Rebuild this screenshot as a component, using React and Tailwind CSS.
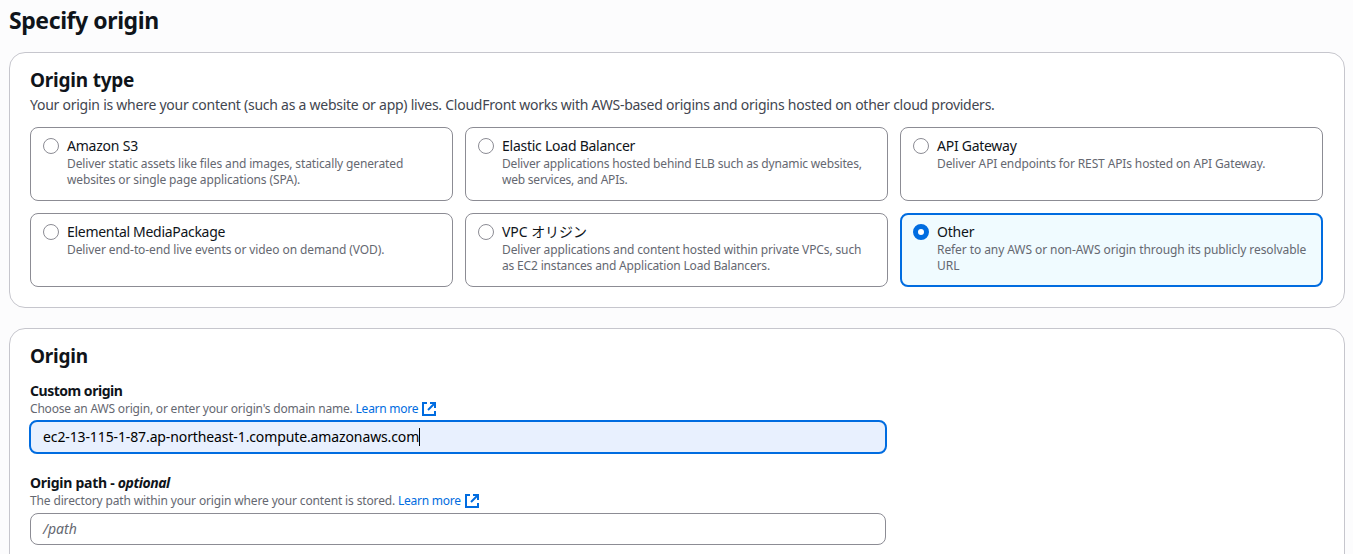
import React from "react";

const ORIGIN_TYPES = [
  {
    label: "Amazon S3",
    track: "tracking-[-0.22px]",
    lines: [
      ["Deliver static assets like files and images, statically generated", "tracking-[-0.133px]"],
      ["websites or single page applications (SPA).", "tracking-[-0.12px]"],
    ],
  },
  {
    label: "Elastic Load Balancer",
    track: "tracking-[-0.25px]",
    lines: [
      ["Deliver applications hosted behind ELB such as dynamic websites,", "tracking-[-0.17px]"],
      ["web services, and APIs.", "tracking-[-0.22px]"],
    ],
  },
  {
    label: "API Gateway",
    track: "tracking-[-0.27px]",
    lines: [["Deliver API endpoints for REST APIs hosted on API Gateway.", "tracking-[-0.13px]"]],
  },
  {
    label: "Elemental MediaPackage",
    track: "tracking-[-0.3px]",
    lines: [["Deliver end-to-end live events or video on demand (VOD).", "tracking-[-0.1px]"]],
  },
  {
    label: "VPC オリジン",
    track: "tracking-[-0.05px]",
    lines: [
      ["Deliver applications and content hosted within private VPCs, such", "tracking-[-0.13px]"],
      ["as EC2 instances and Application Load Balancers.", "tracking-[-0.167px]"],
    ],
  },
  {
    label: "Other",
    track: "tracking-[-0.2px]",
    selected: true,
    lines: [
      ["Refer to any AWS or non-AWS origin through its publicly resolvable", "tracking-[-0.08px]"],
      ["URL", "tracking-normal"],
    ],
  },
];

function ExternalIcon() {
  return (
    <svg viewBox="0 0 16 16" className="ml-[3px] size-4 shrink-0" fill="none" stroke="#006ce0" strokeWidth="2">
      <path d="M9 2h5v5" />
      <path d="m7 9 6.5-6.5" />
      <path d="M14 10v4H2V2h4" />
    </svg>
  );
}

function Tile({ label, track, lines, selected }) {
  return (
    <label
      className={
        "flex h-[74px] gap-2 rounded-lg " +
        (selected ? "border-2 border-[#006ce0] bg-[#f0fbff] px-[11px] pt-[7px]" : "border border-[#8c8c94] bg-white px-3 pt-2")
      }
    >
      <span
        className={
          "mt-0.5 size-4 shrink-0 rounded-full bg-white " + (selected ? "border-5 border-[#006ce0]" : "border border-[#8c8c94]")
        }
      />
      <span className="flex flex-col whitespace-nowrap">
        <span className={"text-[14px] leading-5 text-[#0f141a] " + track}>{label}</span>
        {lines.map(([line, lineTrack]) => (
          <span key={line} className={"text-[12px] leading-4 text-[#656871] " + lineTrack}>
            {line}
          </span>
        ))}
      </span>
    </label>
  );
}

function Hint({ track, children }) {
  return (
    <p className="flex h-4 items-center text-[12px] leading-4 whitespace-nowrap text-[#656871]">
      <span className={"whitespace-pre " + track}>{children} </span>
      <a className="flex items-center text-[#006ce0]">
        <span className="tracking-[-0.25px]">Learn more</span>
        <ExternalIcon />
      </a>
    </p>
  );
}

export default function App() {
  return (
    <main className="h-[554px] overflow-hidden bg-[#fcfcfd] pr-2 pl-[9px] font-['Noto_Sans','Noto_Sans_CJK_JP',sans-serif] text-[#0f141a]">
      <h1 className="h-[52px] pt-[5px] text-[23px] leading-[30px] font-bold tracking-[-0.42px]">
        <span>Specify origin</span>
      </h1>

      <section className="h-[256px] rounded-2xl border border-[#c6c6cd] bg-white px-5 pt-[15px]">
        <h2 className="text-[19px] leading-6 font-bold tracking-[-0.22px]">
          <span>Origin type</span>
        </h2>
        <p className="mt-[3px] text-[14px] leading-5 tracking-[-0.251px] whitespace-nowrap text-[#424650]">
          <span>Your origin is where your content (such as a website or app) lives. CloudFront works with AWS-based origins and origins hosted on other cloud providers.</span>
        </p>
        <div className="mt-3 mr-px grid grid-cols-3 gap-3">
          {ORIGIN_TYPES.map((type) => (
            <Tile key={type.label} {...type} />
          ))}
        </div>
      </section>

      <section className="mt-5 h-[300px] rounded-2xl border border-[#c6c6cd] bg-white px-5 pt-[15px]">
        <h2 className="text-[19px] leading-6 font-bold tracking-[-0.22px]">
          <span>Origin</span>
        </h2>
        <div className="mt-[13px]">
          <h3 className="text-[14px] leading-5 font-bold tracking-[-0.48px]">
            <span>Custom origin</span>
          </h3>
          <Hint track="tracking-[-0.19px]">Choose an AWS origin, or enter your origin's domain name.</Hint>
          <div className="mt-[3px] -ml-px flex h-[34px] w-[858px] items-center rounded-lg border-2 border-[#006ce0] bg-[#e8f0fe] px-3 pb-0.5 text-[14px] tracking-[-0.115px] text-black">
            <span>ec2-13-115-1-87.ap-northeast-1.compute.amazonaws.com</span>
            <span className="mt-0.5 h-[18px] w-px bg-black" />
          </div>
        </div>
        <div className="mt-[19px]">
          <h3 className="text-[14px] leading-5 font-bold">
            <span className="tracking-[-0.26px] whitespace-pre">Origin path - </span>
            <em className="tracking-[-0.45px]">optional</em>
          </h3>
          <Hint track="tracking-[-0.14px]">The directory path within your origin where your content is stored.</Hint>
          <div className="mt-1 flex h-8 w-[856px] items-center rounded-lg border border-[#8c8c94] bg-white px-3 pb-0.5 text-[14px] text-[#656871] italic">
            <span>/path</span>
          </div>
        </div>
      </section>
    </main>
  );
}
